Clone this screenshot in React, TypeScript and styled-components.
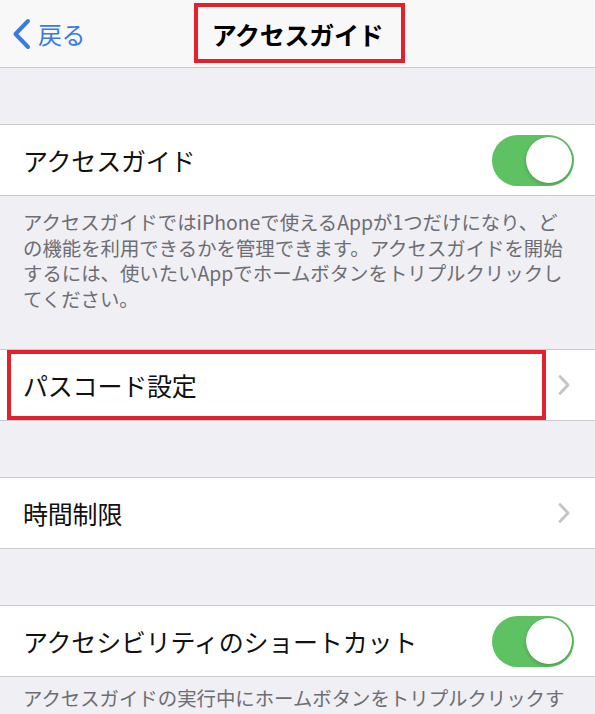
import React from "react";
import styled, { createGlobalStyle } from "styled-components";

const Global = createGlobalStyle`
  html, body {
    margin: 0;
    padding: 0;
    background: #efeff4;
  }
  body {
    font-family: "Noto Sans CJK JP", "Noto Sans", sans-serif;
    -webkit-font-smoothing: antialiased;
  }
`;

const Page = styled.div`
  width: 595px;
  height: 714px;
  overflow: hidden;
  background: #efeff4;
  display: flex;
  flex-direction: column;
`;

const NavBar = styled.header`
  position: relative;
  flex: none;
  height: 67px;
  background: #f8f8f9;
  border-bottom: 1px solid #c9c9cc;
  display: flex;
  align-items: center;
  justify-content: center;
`;

const BackButton = styled.div`
  position: absolute;
  left: 12px;
  top: 0;
  bottom: 0;
  display: flex;
  align-items: center;
  gap: 7px;
  color: #3a7be0;
  font-size: 24px;
  letter-spacing: -0.5px;
`;

const Title = styled.h1`
  margin: 0;
  font-size: 25px;
  font-weight: 700;
  color: #000;
  letter-spacing: -0.3px;
`;

const Highlight = styled.div<{ $top: number; $left: number; $width: number; $height: number }>`
  position: absolute;
  top: ${(p) => p.$top}px;
  left: ${(p) => p.$left}px;
  width: ${(p) => p.$width}px;
  height: ${(p) => p.$height}px;
  border: 4px solid #e3202b;
  box-sizing: border-box;
  pointer-events: none;
`;

const Group = styled.section<{ $gap: number }>`
  position: relative;
  flex: none;
  margin-top: ${(p) => p.$gap}px;
  background: #fff;
  border-top: 1px solid #c9c8cd;
  border-bottom: 1px solid #c9c8cd;
`;

const Row = styled.div`
  height: 70px;
  display: flex;
  align-items: center;
  justify-content: space-between;
  padding: 0 22px 0 23px;
`;

const Label = styled.span`
  font-size: 25px;
  color: #111;
  letter-spacing: -0.2px;
`;

const Footer = styled.p<{ $top: number }>`
  margin: 0;
  flex: none;
  padding: ${(p) => p.$top}px 22px 0 23px;
  font-size: 19.4px;
  line-height: 25.5px;
  color: #6d6d72;
  white-space: pre-line;
`;

const Track = styled.div`
  width: 82px;
  height: 51px;
  border-radius: 26px;
  background: #5ec262;
  position: relative;
  margin-right: -1px;
`;

const Knob = styled.div`
  position: absolute;
  right: 2px;
  top: 2.5px;
  width: 46px;
  height: 46px;
  border-radius: 50%;
  background: #fff;
  box-shadow: 0 2px 4px rgba(0, 0, 0, 0.18), 0 0 0 0.5px rgba(0, 0, 0, 0.08);
`;

const Toggle = () => (
  <Track>
    <Knob />
  </Track>
);

const Chevron = () => (
  <svg width="14" height="22" viewBox="0 0 14 22" style={{ marginRight: 2 }}>
    <path d="M3 2.5 L11 11 L3 19.5" fill="none" stroke="#c4c4c8" strokeWidth="2.8" strokeLinecap="round" strokeLinejoin="round" />
  </svg>
);

const BackChevron = () => (
  <svg width="19" height="32" viewBox="0 0 19 32">
    <path d="M16 3 L3.5 16 L16 29" fill="none" stroke="#3a7be0" strokeWidth="4" strokeLinecap="round" strokeLinejoin="round" />
  </svg>
);

export default function App() {
  return (
    <>
      <Global />
      <Page>
        <NavBar>
          <BackButton>
            <BackChevron />
            <span>戻る</span>
          </BackButton>
          <Title>アクセスガイド</Title>
          <Highlight $top={3} $left={194} $width={211} $height={60} />
        </NavBar>

        <Group $gap={56}>
          <Row>
            <Label>アクセスガイド</Label>
            <Toggle />
          </Row>
        </Group>
        <Footer $top={13}>
          アクセスガイドではiPhoneで使えるAppが1つだけになり、どの機能を利用できるかを管理できます。アクセスガイドを開始するには、使いたいAppでホームボタンをトリプルクリックしてください。
        </Footer>

        <Group $gap={38}>
          <Row>
            <Label>パスコード設定</Label>
            <Chevron />
          </Row>
          <Highlight $top={0} $left={7} $width={539} $height={70} />
        </Group>

        <Group $gap={56}>
          <Row>
            <Label>時間制限</Label>
            <Chevron />
          </Row>
        </Group>

        <Group $gap={56}>
          <Row>
            <Label>アクセシビリティのショートカット</Label>
            <Toggle />
          </Row>
        </Group>
        <Footer $top={8}>アクセスガイドの実行中にホームボタンをトリプルクリックす</Footer>
      </Page>
    </>
  );
}
